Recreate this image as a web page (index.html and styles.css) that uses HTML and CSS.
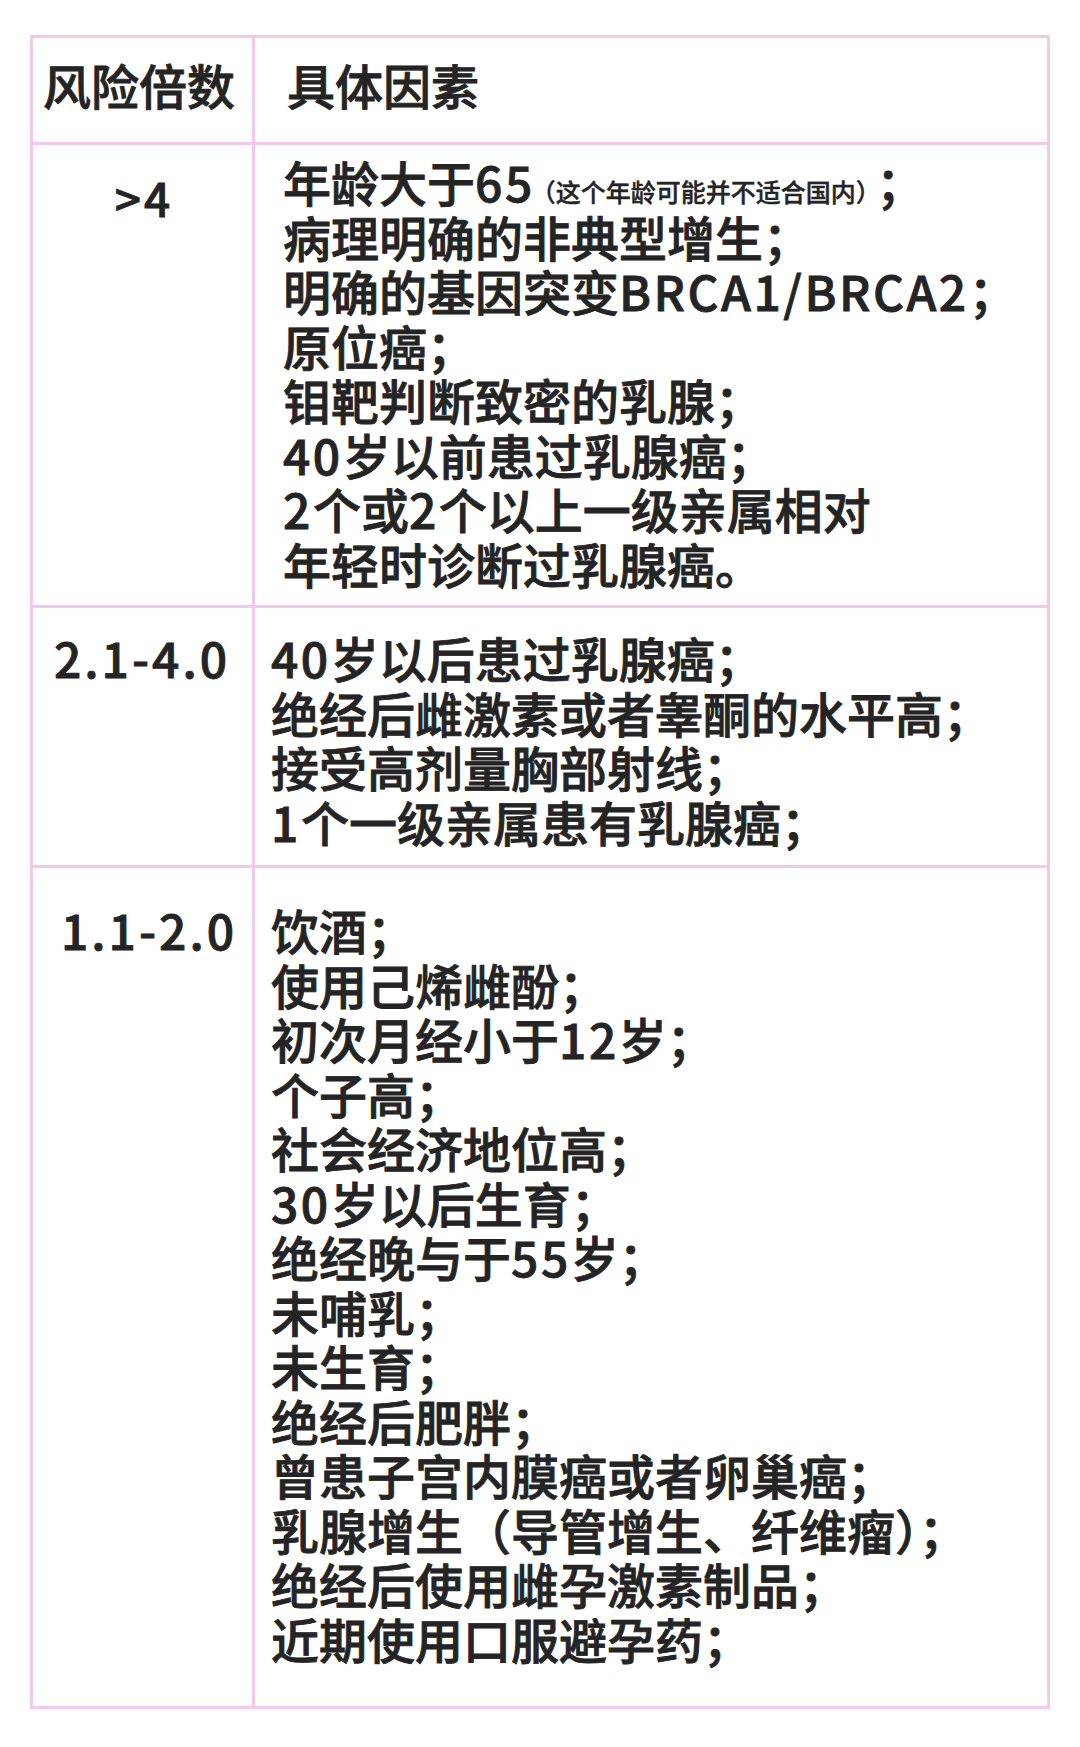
FILE: index.html
```html
<!DOCTYPE html>
<html lang="zh-CN">
<head>
<meta charset="utf-8">
<title>乳腺癌风险因素</title>
<link rel="stylesheet" href="styles.css">
</head>
<body>
<div class="table">
  <div class="cell head head-left">风险倍数</div>
  <div class="cell head head-right">具体因素</div>

  <div class="cell key key-r1"><span class="lat">&gt;4</span></div>
  <div class="cell val val-r1">
    <div class="line">年龄大于<span class="lat">65</span><span class="note">（这个年龄可能并不适合国内）</span><span class="semi">；</span></div>
    <div class="line">病理明确的非典型增生；</div>
    <div class="line">明确的基因突变<span class="lat">BRCA1/BRCA2</span>；</div>
    <div class="line">原位癌；</div>
    <div class="line">钼靶判断致密的乳腺；</div>
    <div class="line"><span class="lat">40</span>岁以前患过乳腺癌；</div>
    <div class="line"><span class="lat">2</span>个或<span class="lat">2</span>个以上一级亲属相对</div>
    <div class="line">年轻时诊断过乳腺癌。</div>
  </div>

  <div class="cell key key-r2"><span class="lat">2.1-4.0</span></div>
  <div class="cell val val-r2">
    <div class="line"><span class="lat">40</span>岁以后患过乳腺癌；</div>
    <div class="line">绝经后雌激素或者睾酮的水平高；</div>
    <div class="line">接受高剂量胸部射线；</div>
    <div class="line"><span class="lat">1</span>个一级亲属患有乳腺癌；</div>
  </div>

  <div class="cell key key-r3"><span class="lat">1.1-2.0</span></div>
  <div class="cell val val-r3">
    <div class="line">饮酒；</div>
    <div class="line">使用己烯雌酚；</div>
    <div class="line">初次月经小于<span class="lat">12</span>岁；</div>
    <div class="line">个子高；</div>
    <div class="line">社会经济地位高；</div>
    <div class="line"><span class="lat">30</span>岁以后生育；</div>
    <div class="line">绝经晚与于<span class="lat">55</span>岁；</div>
    <div class="line">未哺乳；</div>
    <div class="line">未生育；</div>
    <div class="line">绝经后肥胖；</div>
    <div class="line">曾患子宫内膜癌或者卵巢癌；</div>
    <div class="line">乳腺增生（导管增生、纤维瘤）；</div>
    <div class="line">绝经后使用雌孕激素制品；</div>
    <div class="line">近期使用口服避孕药；</div>
  </div>
</div>
</body>
</html>
```

FILE: styles.css
```css
html, body {
  margin: 0;
  padding: 0;
  background: #ffffff;
}

body {
  width: 1080px;
  height: 1747px;
  font-family: "Noto Sans CJK SC", "Noto Sans", sans-serif;
  color: #242424;
  font-weight: 500;
  -webkit-text-stroke: 0.8px #242424;
}

.table {
  display: grid;
  grid-template-columns: 222px 795px;
  width: 1020px;
  margin: 35px 0 0 30px;
  border-top: 3px solid #f3c8e8;
  border-left: 3px solid #f3c8e8;
  box-sizing: border-box;
}

.cell {
  border-right: 3px solid #f3c8e8;
  border-bottom: 3px solid #f3c8e8;
  box-sizing: border-box;
  font-size: 48px;
  line-height: 54.5px;
  white-space: nowrap;
}

.head {
  height: 107px;
  display: flex;
  align-items: center;
  padding-bottom: 11px;
}

.head-left {
  justify-content: center;
  padding-right: 7px;
}

.head-right {
  padding-left: 32px;
}

.key {
  text-align: center;
}

.lat {
  letter-spacing: 2.5px;
}

.key .lat {
  letter-spacing: 3px;
  margin-right: -3px;
}

.key-r1 {
  font-size: 46px;
  padding-top: 25px;
}

.key-r2 {
  padding-top: 22px;
  padding-right: 4px;
}

.key-r3 {
  padding-top: 34px;
  padding-left: 10px;
}

.val-r1 {
  padding: 9px 0 15px 28px;
}

.val-r2 {
  padding: 22px 0 17px 16px;
}

.val-r3 {
  padding: 34px 0 41px 16px;
}

.note {
  font-size: 25px;
  line-height: 1;
  margin-left: -4px;
  -webkit-text-stroke: 0.4px #242424;
}

.semi {
  margin-left: 8px;
}
```
